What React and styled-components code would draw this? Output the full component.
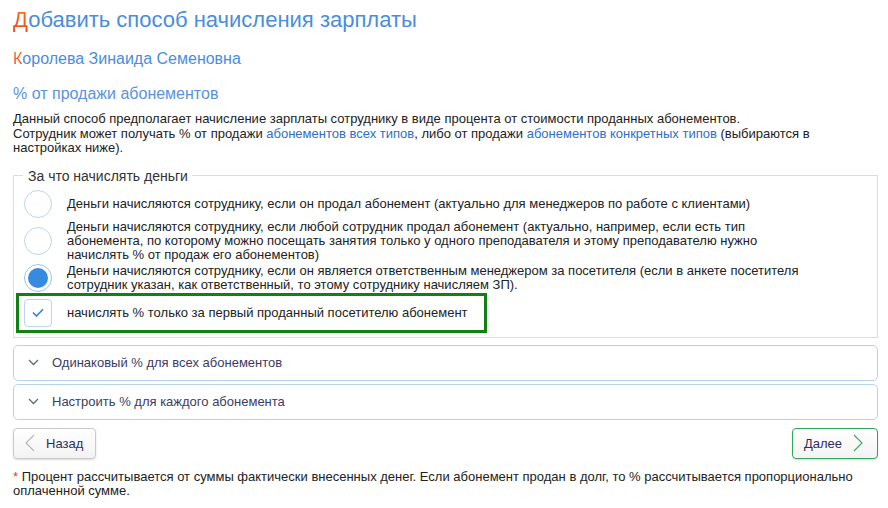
import React from "react";
import styled, { createGlobalStyle } from "styled-components";

const Global = createGlobalStyle`
  html, body { margin: 0; padding: 0; background: #fff; }
  body { font-family: "Liberation Sans", Arial, sans-serif; color: #222; }
`;

const Page = styled.div`
  padding: 0 10px 0 13px;
  width: 865px;
`;

const Title = styled.h1`
  margin: 0;
  padding-top: 5px;
  font-size: 22px;
  line-height: 30px;
  font-weight: normal;
  color: #4a8ddc;
`;

const Cap = styled.span`
  color: #f2601c;
  background: linear-gradient(180deg, #f5731e 0%, #ee4a1c 100%);
  -webkit-background-clip: text;
  background-clip: text;
  -webkit-text-fill-color: transparent;
`;

const Name = styled.h2`
  margin: 14px 0 0;
  font-size: 16px;
  line-height: 20px;
  font-weight: normal;
  color: #4a8ddc;
`;

const Sub = styled.h3`
  margin: 15px 0 0;
  font-size: 16px;
  line-height: 20px;
  font-weight: normal;
  color: #5a93dc;
`;

const Para = styled.p`
  margin: 8px 0 0;
  font-size: 13px;
  line-height: 14.5px;
  color: #222;
`;

const Link = styled.a`
  color: #2f6fc4;
  text-decoration: none;
`;

const Fieldset = styled.fieldset`
  margin: 12px 0 0;
  padding: 0 0 4px 0;
  border: 1px solid #d3e0ea;
  border-radius: 0;
`;

const Legend = styled.legend`
  margin-left: 9px;
  padding: 0 4px 0 5px;
  font-size: 14px;
  line-height: 16px;
  color: #333;
`;

const Options = styled.div`
  display: flex;
  flex-direction: column;
  gap: 2px;
  padding-top: 6px;
`;

const OptionRow = styled.label`
  display: flex;
  align-items: center;
  gap: 15px;
  padding-left: 10px;
  padding-right: 68px;
  min-height: 28px;
  font-size: 13px;
  line-height: 14px;
  color: #222;
`;

const Radio = styled.span`
  flex: 0 0 auto;
  width: 28px;
  height: 28px;
  box-sizing: border-box;
  border-radius: 50%;
  border: 1px solid ${(p) => (p.$checked ? "#9cc3ea" : "#b9d6f0")};
  background: #fff;
  display: flex;
  align-items: center;
  justify-content: center;
  &::after {
    content: "";
    display: ${(p) => (p.$checked ? "block" : "none")};
    width: 20px;
    height: 20px;
    border-radius: 50%;
    background: #368be0;
  }
`;

const Highlight = styled.div`
  margin: 1px 0 0 2px;
  width: 471px;
  height: 40px;
  box-sizing: border-box;
  border: 3px solid #138013;
  display: flex;
  align-items: center;
  gap: 15px;
  padding-left: 5px;
  font-size: 13px;
  color: #222;
`;

const Check = styled.span`
  flex: 0 0 auto;
  width: 28px;
  height: 28px;
  box-sizing: border-box;
  border: 1px solid #b9d6f0;
  border-radius: 4px;
  display: flex;
  align-items: center;
  justify-content: center;
`;

const Accordion = styled.div`
  display: flex;
  flex-direction: column;
  gap: 3px;
  margin-top: 7px;
`;

const AccItem = styled.div`
  height: 36px;
  box-sizing: border-box;
  border: 1px solid #b8d2ea;
  border-radius: 5px;
  display: flex;
  align-items: center;
  gap: 13px;
  padding-left: 14px;
  font-size: 13px;
  color: #3c3c5e;
`;

const Buttons = styled.div`
  display: flex;
  justify-content: space-between;
  margin-top: 8px;
`;

const Button = styled.button`
  height: 31px;
  box-sizing: border-box;
  display: flex;
  align-items: center;
  gap: 11px;
  padding: ${(p) => (p.$next ? "0 14px 0 11px" : "0 12px 0 11px")};
  border: 1px solid ${(p) => (p.$next ? "#2da55a" : "#cacaca")};
  border-radius: 4px;
  background: linear-gradient(180deg, #ffffff 0%, #f3f3f3 100%);
  box-shadow: 0 1px 2px rgba(0, 0, 0, 0.15);
  font-family: "Liberation Sans", Arial, sans-serif;
  font-size: 13px;
  color: #2e2e5e;
  cursor: pointer;
`;

const Note = styled.p`
  margin: 11px 0 0;
  font-size: 13px;
  line-height: 14px;
  color: #222;
`;

const Star = styled.span`
  color: #e33;
`;

const Chevron = ({ dir = "down", color = "#555" }) => {
  if (dir === "down")
    return (
      <svg width="11" height="7" viewBox="0 0 11 7">
        <path d="M1 1l4.5 4.5L10 1" fill="none" stroke="#5a6a80" strokeWidth="1.3" />
      </svg>
    );
  if (dir === "left")
    return (
      <svg width="10" height="18" viewBox="0 0 10 18">
        <path d="M9 1L1 9l8 8" fill="none" stroke={color} strokeWidth="1.1" />
      </svg>
    );
  return (
    <svg width="10" height="18" viewBox="0 0 10 18">
      <path d="M1 1l8 8-8 8" fill="none" stroke={color} strokeWidth="1.1" />
    </svg>
  );
};

const options = [
  {
    text: "Деньги начисляются сотруднику, если он продал абонемент (актуально для менеджеров по работе с клиентами)",
  },
  {
    text: "Деньги начисляются сотруднику, если любой сотрудник продал абонемент (актуально, например, если есть тип абонемента, по которому можно посещать занятия только у одного преподавателя и этому преподавателю нужно начислять % от продаж его абонементов)",
  },
  {
    text: "Деньги начисляются сотруднику, если он является ответственным менеджером за посетителя (если в анкете посетителя сотрудник указан, как ответственный, то этому сотруднику начисляем ЗП).",
    checked: true,
  },
];

export default function App() {
  return (
    <>
      <Global />
      <Page>
        <Title>
          <Cap>Д</Cap>обавить способ начисления зарплаты
        </Title>
        <Name>
          <Cap>К</Cap>оролева Зинаида Семеновна
        </Name>
        <Sub>% от продажи абонементов</Sub>
        <Para>
          Данный способ предполагает начисление зарплаты сотруднику в виде процента от стоимости проданных абонементов.
          <br />
          Сотрудник может получать % от продажи <Link>абонементов всех типов</Link>, либо от продажи{" "}
          <Link>абонементов конкретных типов</Link> (выбираются в настройках ниже).
        </Para>
        <Fieldset>
          <Legend>За что начислять деньги</Legend>
          <Options>
            {options.map((o, i) => (
              <OptionRow key={i}>
                <Radio $checked={o.checked} />
                <span>{o.text}</span>
              </OptionRow>
            ))}
          </Options>
          <Highlight>
            <Check>
              <svg width="12" height="9" viewBox="0 0 12 9">
                <path d="M1 4.5l3.5 3.5L11 1.2" fill="none" stroke="#3a7fd0" strokeWidth="1.6" />
              </svg>
            </Check>
            <span>начислять % только за первый проданный посетителю абонемент</span>
          </Highlight>
        </Fieldset>
        <Accordion>
          <AccItem>
            <Chevron dir="down" />
            <span>Одинаковый % для всех абонементов</span>
          </AccItem>
          <AccItem>
            <Chevron dir="down" />
            <span>Настроить % для каждого абонемента</span>
          </AccItem>
        </Accordion>
        <Buttons>
          <Button>
            <Chevron dir="left" color="#b5b5b5" />
            <span>Назад</span>
          </Button>
          <Button $next>
            <span>Далее</span>
            <Chevron dir="right" color="#3aaa62" />
          </Button>
        </Buttons>
        <Note>
          <Star>*</Star> Процент рассчитывается от суммы фактически внесенных денег. Если абонемент продан в долг, то % рассчитывается пропорционально оплаченной сумме.
        </Note>
      </Page>
    </>
  );
}
